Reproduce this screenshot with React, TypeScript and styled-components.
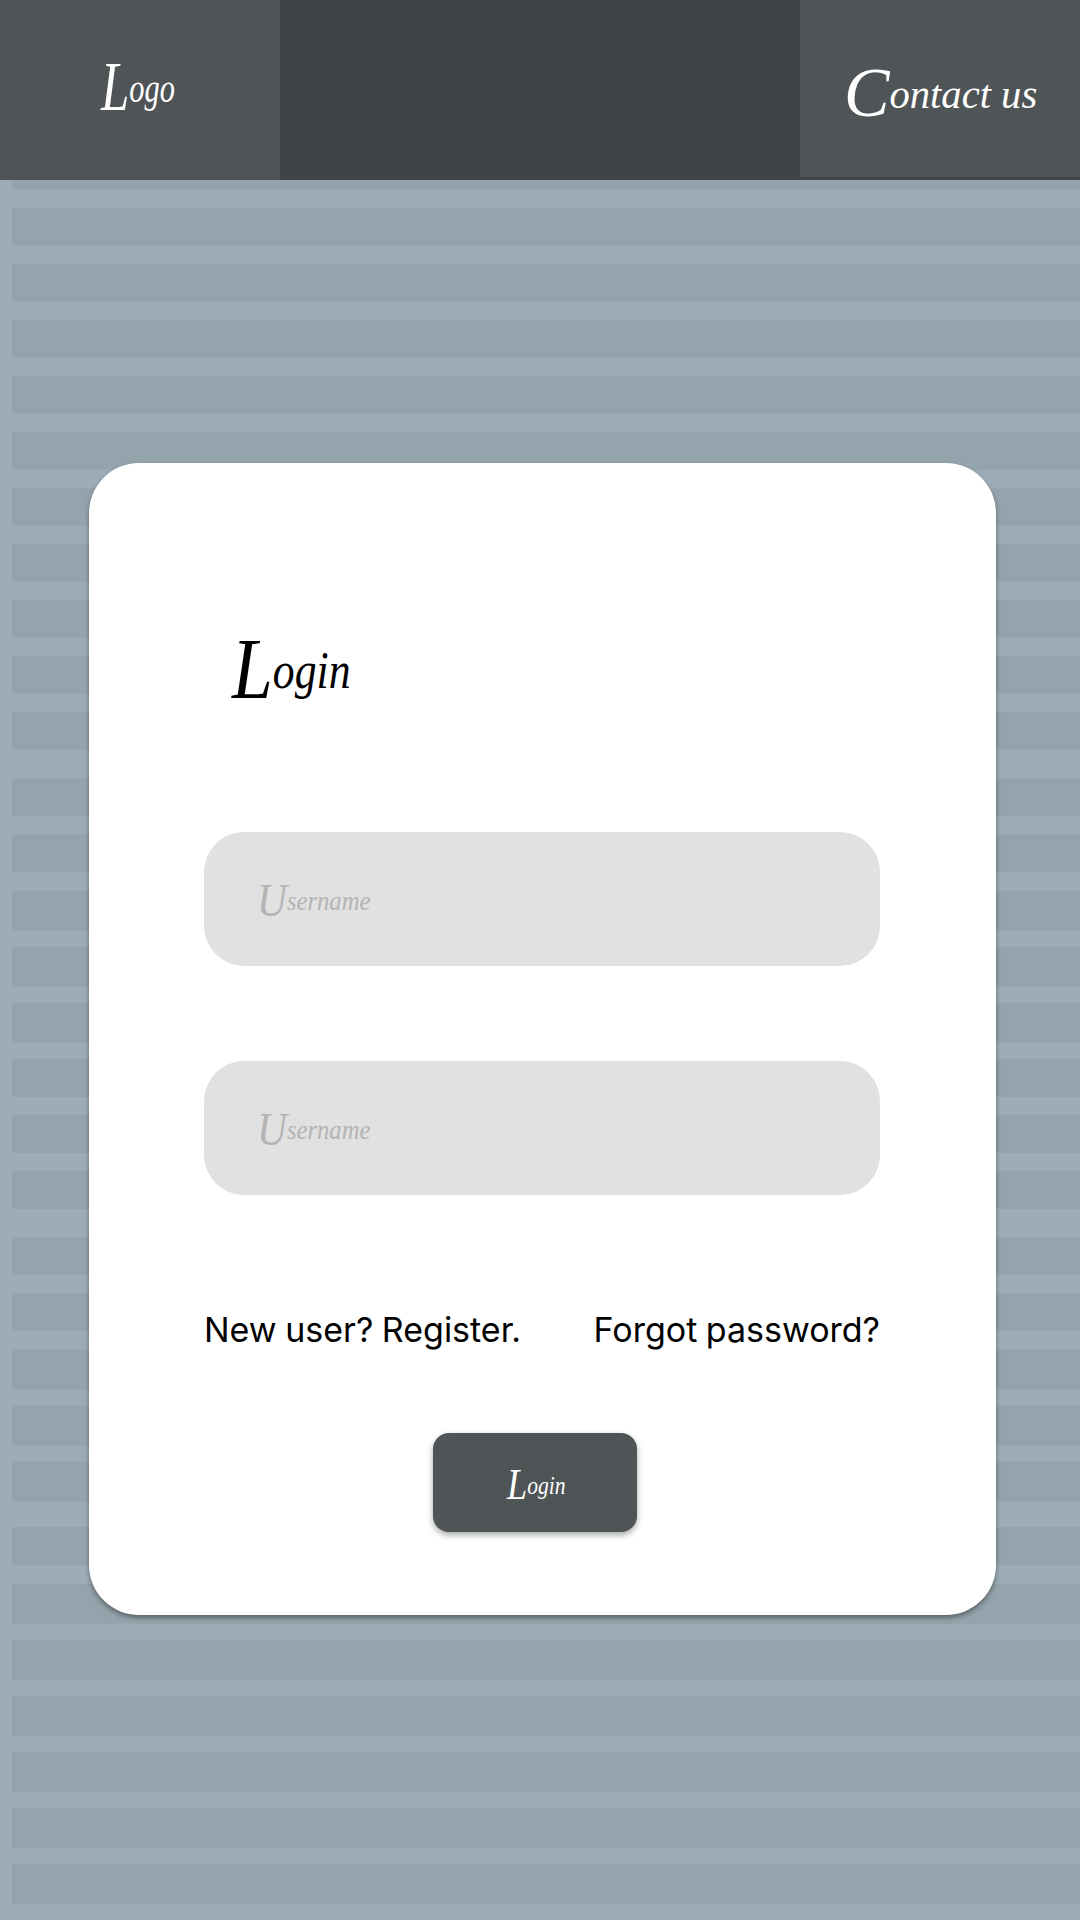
import React from "react";
import styled, { createGlobalStyle } from "styled-components";

const GlobalStyle = createGlobalStyle`
  * { box-sizing: border-box; }
  body { margin: 0; background: #9cadb7; }
`;

const Page = styled.div`
  position: relative;
  width: 1080px;
  height: 1920px;
  overflow: hidden;
  display: flex;
  flex-direction: column;
  background: #9cadb7;
`;

const Stripes = styled.div`
  position: absolute;
  inset: 0 0 0 12px;
  padding-top: 180px;
`;

const Stripe = styled.div<{ $gap: number; $height: number }>`
  margin-top: ${(p) => p.$gap}px;
  height: ${(p) => p.$height}px;
  background: #94a4ac;
`;

const Nav = styled.header`
  position: relative;
  display: flex;
  justify-content: space-between;
  align-items: flex-start;
  height: 180px;
  flex: none;
  background: #404446;
`;

const NavItem = styled.a<{ $height: number; $pad: string }>`
  display: block;
  width: 280px;
  height: ${(p) => p.$height}px;
  padding: ${(p) => p.$pad};
  background: #4f5457;
  color: #fff;
`;

// Calligraphic lettering: a tall dropped initial followed by small, narrow letters.
const Script = styled.span<{ $size: number; $narrow: number }>`
  display: block;
  font-family: "Liberation Serif", serif;
  font-style: italic;
  font-weight: 400;
  font-size: ${(p) => p.$size}px;
  line-height: 1;
  white-space: nowrap;
  transform: scaleX(${(p) => p.$narrow});
  transform-origin: left center;

  &::first-letter {
    font-size: 1.68em;
    line-height: 0;
    vertical-align: -0.12em;
  }
`;

const Card = styled.main`
  position: relative;
  display: flex;
  flex-direction: column;
  width: 907px;
  height: 1152px;
  margin: 283px 0 0 89px;
  padding: 165px 116px 0 115px;
  border-radius: 50px;
  background: #fff;
  box-shadow: 0 3px 5px rgba(0, 0, 0, 0.38);
`;

const Title = styled.h1`
  margin: 0;
  padding: 17px 0 0 28px;
  height: 204px;
  color: #000;
`;

const Field = styled.div`
  display: flex;
  align-items: center;
  height: 134px;
  flex: none;
  margin-bottom: 95px;
  padding: 4px 0 0 53px;
  border-radius: 40px;
  background: #e1e1e1;
  color: #b4b4b4;
`;

const Links = styled.div`
  display: flex;
  justify-content: space-between;
  height: 143px;
  padding-top: 20px;
`;

const Link = styled.a`
  font-family: Inter, sans-serif;
  font-size: 34px;
  line-height: 40px;
  word-spacing: -1px;
  white-space: nowrap;
  color: #000;
`;

const Submit = styled.button`
  display: flex;
  align-items: center;
  width: 204px;
  height: 99px;
  margin-left: 229px;
  padding: 6px 0 0 74px;
  border: 0;
  border-radius: 16px;
  background: #4f5457;
  color: #fff;
  box-shadow: 0 3px 6px rgba(0, 0, 0, 0.35);
`;

// Top and bottom edge of every background band.
const bands: [number, number][] = [
  [180, 190], [208, 246], [264, 302], [320, 358], [376, 414], [432, 470],
  [488, 526], [544, 582], [600, 638], [656, 694], [712, 750],
  [778, 816], [834, 872], [891, 931], [947, 987], [1003, 1043],
  [1059, 1097], [1115, 1153], [1171, 1209],
  [1237, 1275], [1293, 1331], [1350, 1390], [1406, 1446], [1462, 1502],
  [1527, 1565], [1584, 1624], [1640, 1680], [1696, 1736], [1752, 1792],
  [1808, 1848], [1864, 1904],
];

export default function App() {
  return (
    <Page>
      <GlobalStyle />
      <Stripes>
        {bands.map(([top, bottom], i) => (
          <Stripe key={top} $gap={i ? top - bands[i - 1][1] : 0} $height={bottom - top} />
        ))}
      </Stripes>
      <Nav>
        <NavItem $height={180} $pad="68px 0 0 101px">
          <Script $size={41} $narrow={0.74}>Logo</Script>
        </NavItem>
        <NavItem $height={177} $pad="74px 0 0 44px">
          <Script $size={41} $narrow={0.99}>Contact us</Script>
        </NavItem>
      </Nav>
      <Card>
        <Title>
          <Script $size={52} $narrow={0.84}>Login</Script>
        </Title>
        <Field>
          <Script $size={28} $narrow={0.88}>Username</Script>
        </Field>
        <Field>
          <Script $size={28} $narrow={0.88}>Username</Script>
        </Field>
        <Links>
          <Link>New user? Register.</Link>
          <Link>Forgot password?</Link>
        </Links>
        <Submit type="button">
          <Script $size={26} $narrow={0.83}>Login</Script>
        </Submit>
      </Card>
    </Page>
  );
}
